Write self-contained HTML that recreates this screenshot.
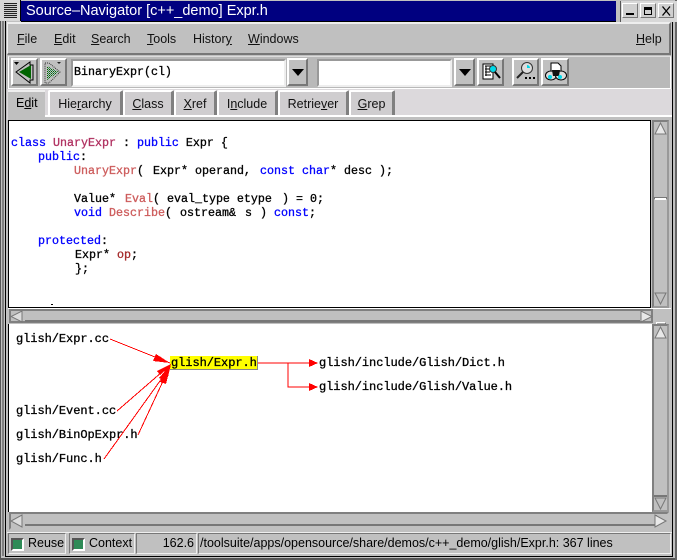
<!DOCTYPE html>
<html><head><meta charset="utf-8"><style>
html,body{margin:0;padding:0}
body{width:677px;height:560px;overflow:hidden;position:relative;background:#c0c0c0;font-family:"Liberation Sans",sans-serif;font-size:12.5px;color:#000}
div,span.a,svg{position:absolute}
.t{white-space:pre;line-height:14px}
.b{box-sizing:border-box;background:#c0c0c0;border:2px solid;border-color:#fff #777 #777 #fff}
.s{box-sizing:border-box;background:#c0c0c0;border:2px solid;border-color:#777 #fff #fff #777}
.tab{box-sizing:border-box;top:90px;height:26px;background:#cfcdcf;border-left:2px solid #fff;border-top:2px solid #fff;border-right:3px solid #808080;border-radius:2px 2px 0 0;text-align:center;line-height:24px;color:#111}
.m{top:32px;color:#111;white-space:pre;line-height:14px}
u{text-underline-offset:1px}
.c{font:11.67px/14px "Liberation Mono",monospace;white-space:pre;color:#000;left:11px;-webkit-text-stroke:.3px}
.g{font:12px/14px "Liberation Mono",monospace;letter-spacing:-.05px;white-space:pre;-webkit-text-stroke:.3px}
i{font-style:normal;color:#00f}b{font-weight:normal;color:#b03060}em{font-style:normal;color:#cd5c5c}
</style></head><body>
<!-- frame -->
<div style="left:0;top:0;width:677px;height:560px;background:#c0c0c0"></div>
<div style="left:0;top:0;width:1px;height:560px;background:#555"></div>
<div style="left:2px;top:20px;width:2px;height:536px;background:#808080"></div>
<div style="left:5px;top:20px;width:1px;height:537px;background:#000"></div>
<div style="left:5px;top:556px;width:668px;height:1px;background:#000"></div>
<div style="left:0;top:558px;width:677px;height:2px;background:#555"></div>
<div style="left:672px;top:22px;width:1px;height:535px;background:#000"></div>
<div style="left:675px;top:0;width:2px;height:560px;background:#666"></div>
<!-- title bar -->
<div style="left:21px;top:1px;width:595px;height:20px;background:#000080;border-bottom:1px solid #000"></div>
<div style="left:0;top:0;width:21px;height:21px;background:#d8d8d8;border-right:1px solid #000;box-sizing:border-box"></div>
<div style="left:4px;top:3px;width:13px;height:15px;background:repeating-linear-gradient(#222 0 1px,#ccc 1px 2px)"></div>
<div class="t" style="left:26px;top:3px;color:#fff;font-size:14.5px;line-height:17px">Source&#8211;Navigator [c++_demo] Expr.h</div>
<div style="left:620px;top:1px;width:57px;height:21px;background:#d8d8d8;border-left:1px solid #555;box-sizing:border-box"></div>
<div class="b" style="left:622px;top:3px;width:16px;height:15px;background:#d0d0d0;border-width:1px"></div>
<div style="left:626px;top:13px;width:8px;height:2px;background:#000"></div>
<div class="b" style="left:640px;top:3px;width:16px;height:15px;background:#d0d0d0;border-width:1px"></div>
<div style="left:644px;top:7px;width:8px;height:8px;box-sizing:border-box;border:1px solid #000;border-top-width:3px"></div>
<div class="b" style="left:658px;top:3px;width:16px;height:15px;background:#d0d0d0;border-width:1px"></div>
<svg style="left:662px;top:6px" width="9" height="10"><path d="M0.5 0.5L8 9.5M8 0.5L0.5 9.5" stroke="#000" stroke-width="1.3" fill="none"/></svg>
<!-- menu -->
<div style="left:7px;top:22px;width:664px;height:33px;background:#c0c0c0;border-top:2px solid #eee;border-left:1px solid #eee;border-bottom:2px solid #777;border-right:2px solid #777;box-sizing:border-box"></div>
<div class="m" style="left:17px"><u>F</u>ile</div>
<div class="m" style="left:54px"><u>E</u>dit</div>
<div class="m" style="left:91px"><u>S</u>earch</div>
<div class="m" style="left:147px"><u>T</u>ools</div>
<div class="m" style="left:193px">Histor<u>y</u></div>
<div class="m" style="left:248px"><u>W</u>indows</div>
<div class="m" style="left:636px"><u>H</u>elp</div>
<!-- toolbar -->
<div style="left:8px;top:56px;width:663px;height:33px;box-sizing:border-box;border:1px solid #fff;border-top-color:#ddd;background:#b9b9b9"></div>
<div class="b" style="left:11px;top:58px;width:27px;height:28px"></div>
<svg style="left:11px;top:58px" width="27" height="28"><path d="M5 14L19 4V7H22V22H19V25Z" fill="#c0c0c0" stroke="#000"/><path d="M8 14L20 7V21Z" fill="#006400"/><path d="M3 4H8L5.500 7Z" fill="#000"/></svg>
<div class="b" style="left:40px;top:58px;width:27px;height:28px"></div>
<svg style="left:40px;top:58px" width="27" height="28"><defs><pattern id="ck" width="2" height="2" patternUnits="userSpaceOnUse"><rect width="2" height="2" fill="#c0c0c0"/><rect width="1" height="1" fill="#2e8b57"/><rect x="1" y="1" width="1" height="1" fill="#006400"/></pattern></defs><path d="M5 5H9L20 14L9 25H5Z" fill="#c0c0c0" stroke="#333" stroke-dasharray="1 1"/><path d="M7 8L19 14L7 22Z" fill="url(#ck)"/><path d="M17 4H21L19 6Z" fill="#222"/></svg>
<div class="s" style="left:71px;top:59px;width:215px;height:28px;background:#fff;border-color:#999 #eee #eee #999"></div>
<div class="c" style="left:74px;top:65px">BinaryExpr(cl)</div>
<div class="b" style="left:287px;top:58px;width:21px;height:28px"></div>
<svg style="left:292px;top:69px" width="12" height="8"><path d="M0 0H12L6 7Z" fill="#000"/></svg>
<div class="s" style="left:317px;top:59px;width:135px;height:28px;background:#fff;border-color:#999 #eee #eee #999"></div>
<div class="b" style="left:454px;top:58px;width:21px;height:28px"></div>
<svg style="left:459px;top:69px" width="12" height="8"><path d="M0 0H12L6 7Z" fill="#000"/></svg>
<div class="b" style="left:477px;top:58px;width:27px;height:28px"></div>
<svg style="left:482px;top:63px" width="20" height="18"><path d="M1 1H11V16H1Z" fill="#fff" stroke="#000"/><path d="M3 3H9M3 6H8M3 9H8M3 12H9M4 3V13" stroke="#000"/><circle cx="11" cy="6" r="3.5" fill="#00d8e8" stroke="#333"/><path d="M13 9L18 15" stroke="#000" stroke-width="2"/></svg>
<div class="b" style="left:512px;top:58px;width:27px;height:28px"></div>
<svg style="left:515px;top:61px" width="22" height="20"><circle cx="12" cy="7" r="5.500" fill="#ddd" stroke="#333"/><path d="M12 4a3 3 0 0 1 3 3H12Z" fill="#00d8e8"/><path d="M8 11L2 17" stroke="#222" stroke-width="2"/><path d="M10 17h2v2h-2zM14 17h2v2h-2zM18 17h2v2h-2z" fill="#000" transform="translate(0 -1)"/></svg>
<div class="b" style="left:541px;top:58px;width:28px;height:28px"></div>
<svg style="left:544px;top:62px" width="24" height="20"><path d="M7 1H14L17 4V10H7Z" fill="#fff" stroke="#000"/><ellipse cx="7" cy="13.500" rx="5.500" ry="4.500" fill="#ddd" stroke="#000"/><ellipse cx="17" cy="13.500" rx="5.500" ry="4.500" fill="#ddd" stroke="#000"/><path d="M8 8H16L15 14H9Z" fill="#111"/><circle cx="6" cy="15" r="2" fill="#00d8e8"/><circle cx="16" cy="15" r="2" fill="#00d8e8"/></svg>
<!-- tabs -->
<div style="left:7px;top:89px;width:665px;height:31px;background:#dcd9dc"></div>
<div style="left:8px;top:90px;width:37px;height:30px;background:#c0c0c0;border-top:2px solid #eee;box-sizing:border-box"></div>
<div class="t" style="left:16px;top:96px;line-height:14px"><span>E<u>d</u>it</span></div>
<div class="tab" style="left:48px;width:75px">Hie<u>r</u>archy</div>
<div class="tab" style="left:123px;width:51px"><u>C</u>lass</div>
<div class="tab" style="left:174px;width:43px"><u>X</u>ref</div>
<div class="tab" style="left:217px;width:61px">I<u>n</u>clude</div>
<div class="tab" style="left:278px;width:71px">Retrie<u>v</u>er</div>
<div class="tab" style="left:349px;width:46px"><u>G</u>rep</div>
<div style="left:45px;top:115px;width:627px;height:2px;background:#fff"></div>
<div style="left:45px;top:117px;width:627px;height:3px;background:#c0c0c0"></div>
<!-- editor -->
<div style="left:8px;top:120px;width:643px;height:188px;background:#fff;border:1px solid #000;box-sizing:border-box;overflow:hidden"></div>
<div class="c" style="top:136px"><i>class</i> <b>UnaryExpr</b> : <i>public</i> Expr {</div>
<div class="c" style="top:150px;left:38px"><i>public</i>:</div>
<div class="c" style="top:164px;left:74px"><em>UnaryExpr</em>(</div>
<div class="c" style="top:164px;left:153px">Expr* operand,</div>
<div class="c" style="top:164px;left:260px"><i>const</i></div>
<div class="c" style="top:164px;left:302px"><i>char</i>* desc );</div>
<div class="c" style="top:192px;left:74px">Value*</div>
<div class="c" style="top:192px;left:125px"><em>Eval</em>( eval_type etype</div>
<div class="c" style="top:192px;left:282px">)</div>
<div class="c" style="top:192px;left:296px">=</div>
<div class="c" style="top:192px;left:310px">0;</div>
<div class="c" style="top:206px;left:74px"><i>void</i> <em>Describe</em>(</div>
<div class="c" style="top:206px;left:180px">ostream&amp;</div>
<div class="c" style="top:206px;left:245px">s</div>
<div class="c" style="top:206px;left:260px">)</div>
<div class="c" style="top:206px;left:274px"><i>const</i>;</div>
<div class="c" style="top:234px;left:38px"><i>protected</i>:</div>
<div class="c" style="top:248px;left:75px">Expr*</div>
<div class="c" style="top:248px;left:117px"><span style="color:#a52a2a">op</span>;</div>
<div class="c" style="top:262px;left:75px">};</div>
<div style="left:51px;top:304px;width:2px;height:1px;background:#000"></div>
<!-- v scroll 1 -->
<div class="s" style="left:652px;top:120px;width:17px;height:188px;border-color:#808080 #999 #999 #808080"></div>
<svg style="left:654px;top:122px" width="13" height="13"><path d="M6.500 1L12 12H1Z" fill="#e8e8e8" stroke="#777"/></svg>
<div style="left:654px;top:135px;width:13px;height:64px;box-sizing:border-box;border-bottom:2px solid #777;background:#c0c0c0"></div>
<div style="left:655px;top:198px;width:11px;height:2px;background:#fff"></div>
<svg style="left:654px;top:292px" width="13" height="13"><path d="M1 1H12L6.500 12Z" fill="#c0c0c0" stroke="#777"/></svg>
<!-- sash -->
<div style="left:8px;top:308px;width:663px;height:1px;background:#fff"></div>
<div class="s" style="left:9px;top:309px;width:644px;height:14px;border-color:#808080"></div>
<svg style="left:10px;top:310px" width="14" height="13"><path d="M12 1V12L1 6.500Z" fill="#ddd" stroke="#777"/></svg>
<div style="left:25px;top:311px;width:615px;height:9px;border-bottom:2px solid #777;background:#c0c0c0"></div>
<svg style="left:640px;top:310px" width="13" height="13"><path d="M1 1V12L12 6.500Z" fill="#e8e8e8" stroke="#777"/></svg>
<div class="b" style="left:656px;top:322px;width:10px;height:10px;border-width:1px;background:#aaa"></div>
<!-- graph -->
<div style="left:8px;top:324px;width:644px;height:188px;background:#fff;border-left:1px solid #000;box-sizing:border-box"></div>
<div style="left:170px;top:356px;width:88px;height:14px;background:#ff0;border-right:1px solid #888;border-bottom:1px solid #888;box-sizing:border-box"></div>
<svg style="left:0;top:324px" width="652" height="188" shape-rendering="crispEdges">
<g stroke="#f00" stroke-width="1" fill="none">
<path d="M110 15L170 39M117 87L170 41M138 111L170 42M104 135L170 43"/>
<path d="M258 39H310M288 39V63H310"/>
</g>
<g fill="#f00">
<path d="M170 39L156 30L153 37Z"/>
<path d="M171 40L157 47L160 51Z"/>
<path d="M171 40L159 54L165 57Z"/>
<path d="M171 40L160 58L166 60Z"/>
<path d="M171 40L164 47L168 53Z"/>
<path d="M318 39L309 35V43Z"/>
<path d="M318 63L309 59V67Z"/>
</g></svg>
<div class="g" style="left:16px;top:332px">glish/Expr.cc</div>
<div class="g" style="left:171px;top:356px">glish/Expr.h</div>
<div class="g" style="left:319px;top:356px">glish/include/Glish/Dict.h</div>
<div class="g" style="left:319px;top:380px">glish/include/Glish/Value.h</div>
<div class="g" style="left:16px;top:404px">glish/Event.cc</div>
<div class="g" style="left:16px;top:428px">glish/BinOpExpr.h</div>
<div class="g" style="left:16px;top:452px">glish/Func.h</div>
<!-- v scroll 2 -->
<div class="s" style="left:652px;top:324px;width:17px;height:188px;border-color:#808080 #999 #999 #808080"></div>
<svg style="left:654px;top:326px" width="13" height="13"><path d="M6.500 1L12 12H1Z" fill="#e8e8e8" stroke="#777"/></svg>
<div style="left:654px;top:339px;width:13px;height:158px;box-sizing:border-box;border-bottom:2px solid #777;background:#c0c0c0"></div>
<svg style="left:654px;top:497px" width="13" height="13"><path d="M1 1H12L6.500 12Z" fill="#c0c0c0" stroke="#777"/></svg>
<!-- h scroll 2 -->
<div class="s" style="left:9px;top:512px;width:660px;height:18px;border-color:#808080 #c0c0c0 #c0c0c0 #808080"></div>
<svg style="left:10px;top:514px" width="14" height="14"><path d="M12 1V13L1 7Z" fill="#ddd" stroke="#777"/></svg>
<div style="left:25px;top:515px;width:630px;height:9px;box-sizing:content-box;border-bottom:2px solid #777;border-right:2px solid #777;background:#c0c0c0"></div>
<svg style="left:654px;top:514px" width="14" height="14"><path d="M1 1V13L12 7Z" fill="#e8e8e8" stroke="#777"/></svg>
<!-- status -->
<div style="left:7px;top:532px;width:665px;height:1px;background:#eee"></div>
<div class="s" style="left:8px;top:533px;width:58px;height:21px;border-width:1px;border-color:#777 #eee #eee #777"></div>
<div style="left:11px;top:538px;width:9px;height:9px;background:#2e8b57;border:2px solid;border-color:#555 #fff #fff #555"></div>
<div class="t" style="left:28px;top:536px">Reuse</div>
<div class="s" style="left:69px;top:533px;width:66px;height:21px;border-width:1px;border-color:#777 #eee #eee #777"></div>
<div style="left:72px;top:538px;width:9px;height:9px;background:#2e8b57;border:2px solid;border-color:#555 #fff #fff #555"></div>
<div class="t" style="left:89px;top:536px">Context</div>
<div class="s" style="left:136px;top:533px;width:61px;height:21px;border-width:1px;border-color:#777 #eee #eee #777"></div>
<div class="t" style="left:136px;top:536px;width:58px;text-align:right">162.6</div>
<div class="s" style="left:198px;top:533px;width:473px;height:21px;border-width:1px;border-color:#777 #eee #eee #777"></div>
<div class="t" style="left:200px;top:536px">/toolsuite/apps/opensource/share/demos/c++_demo/glish/Expr.h: 367 lines</div>
</body></html>
